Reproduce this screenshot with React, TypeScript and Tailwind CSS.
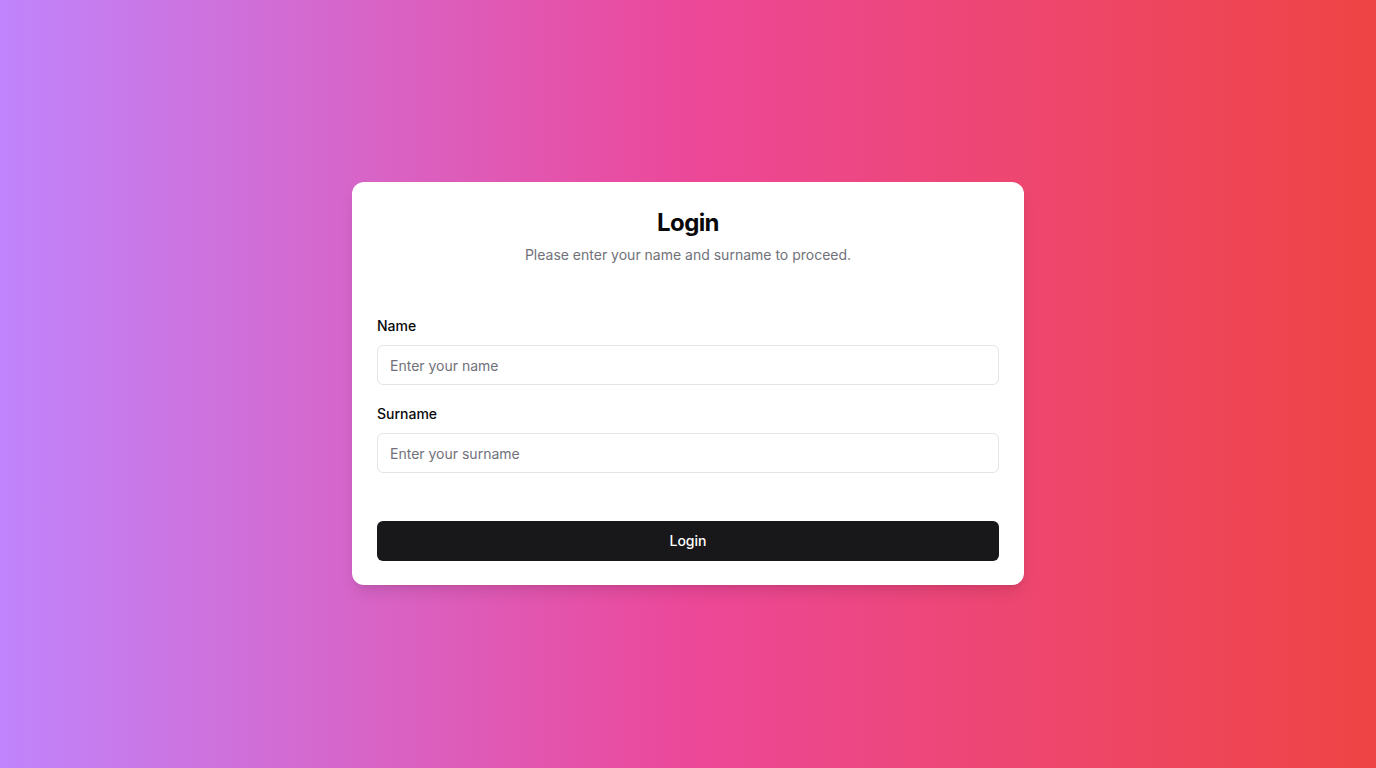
import React from "react";

export default function App() {
  return (
    <div
      className="min-h-screen w-full flex items-center justify-center pb-[2px] bg-linear-to-r/srgb from-[#c084fc] via-[#ec4899] to-[#ef4444]"
      style={{ fontFamily: "Inter, 'Noto Sans', sans-serif" }}
    >
      <div className="w-[672px] bg-white rounded-xl shadow-lg px-[25px] pt-[25px] pb-6 text-[#09090b]">
        <div className="flex flex-col items-center">
          <h1 className="text-2xl leading-8 font-bold tracking-tight">Login</h1>
          <p className="mt-1.5 text-sm leading-5 text-[#71717a]">
            Please enter your name and surname to proceed.
          </p>
        </div>
        <form className="mt-[51px] flex flex-col" onSubmit={(e) => e.preventDefault()}>
          <label className="text-sm leading-5 font-medium">Name</label>
          <input
            className="mt-[9px] h-10 w-full rounded-md border border-[#e4e4e7] px-3 pt-[2px] text-sm text-[#09090b] placeholder:text-[#71717a] outline-none"
            placeholder="Enter your name"
          />
          <label className="mt-[19px] text-sm leading-5 font-medium">Surname</label>
          <input
            className="mt-[9px] h-10 w-full rounded-md border border-[#e4e4e7] px-3 pt-[2px] text-sm text-[#09090b] placeholder:text-[#71717a] outline-none"
            placeholder="Enter your surname"
          />
          <button
            type="submit"
            className="mt-12 h-10 w-full rounded-md bg-[#18181b] text-white text-sm font-medium"
          >
            Login
          </button>
        </form>
      </div>
    </div>
  );
}
